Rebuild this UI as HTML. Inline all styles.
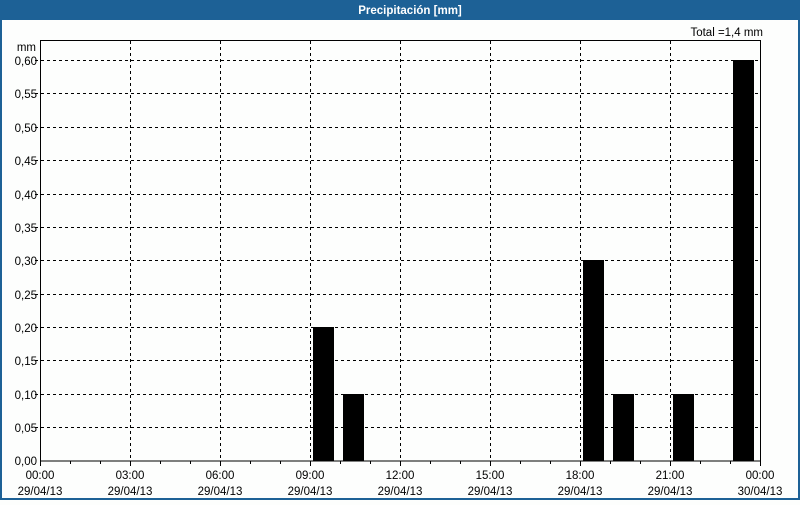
<!DOCTYPE html>
<html><head><meta charset="utf-8"><style>
body{margin:0;width:800px;height:500px;overflow:hidden;background:#fdfefd;font-family:"Liberation Sans",sans-serif}
</style></head><body>
<svg width="800" height="500" xmlns="http://www.w3.org/2000/svg" font-family="Liberation Sans, sans-serif" font-size="11.5">
<rect x="0" y="0" width="800" height="500" fill="#fdfefd"/>
<rect x="0" y="0" width="800" height="20" fill="#1d6196"/>
<rect x="0" y="0" width="2" height="500" fill="#1d6196"/>
<rect x="798" y="0" width="2" height="500" fill="#1d6196"/>
<rect x="0" y="498" width="800" height="2" fill="#1d6196"/>
<text x="410" y="14" fill="#fff" font-weight="bold" text-anchor="middle" font-size="11.5">Precipitación [mm]</text>
<text x="763" y="36" text-anchor="end" fill="#000">Total =1,4 mm</text>
<text x="36" y="51" text-anchor="end">mm</text>
<g stroke="#000" stroke-width="1" stroke-dasharray="3,3" shape-rendering="crispEdges">
<line x1="130.5" y1="41" x2="130.5" y2="461"/><line x1="220.5" y1="41" x2="220.5" y2="461"/>
<line x1="310.5" y1="41" x2="310.5" y2="461"/><line x1="400.5" y1="41" x2="400.5" y2="461"/>
<line x1="490.5" y1="41" x2="490.5" y2="461"/><line x1="580.5" y1="41" x2="580.5" y2="461"/>
<line x1="670.5" y1="41" x2="670.5" y2="461"/>
<line x1="35" y1="60.5" x2="760" y2="60.5"/><line x1="35" y1="93.5" x2="760" y2="93.5"/>
<line x1="35" y1="127.5" x2="760" y2="127.5"/><line x1="35" y1="160.5" x2="760" y2="160.5"/>
<line x1="35" y1="194.5" x2="760" y2="194.5"/><line x1="35" y1="227.5" x2="760" y2="227.5"/>
<line x1="35" y1="260.5" x2="760" y2="260.5"/><line x1="35" y1="294.5" x2="760" y2="294.5"/>
<line x1="35" y1="327.5" x2="760" y2="327.5"/><line x1="35" y1="360.5" x2="760" y2="360.5"/>
<line x1="35" y1="394.5" x2="760" y2="394.5"/><line x1="35" y1="427.5" x2="760" y2="427.5"/>
</g>
<g fill="#000">
<rect x="313" y="327" width="21" height="134"/>
<rect x="343" y="394" width="21" height="67"/>
<rect x="583" y="260" width="21" height="201"/>
<rect x="613" y="394" width="21" height="67"/>
<rect x="673" y="394" width="21" height="67"/>
<rect x="733" y="60" width="21" height="401"/>
</g>
<rect x="40.5" y="40.5" width="720" height="420.5" fill="none" stroke="#000" shape-rendering="crispEdges"/>
<g stroke="#000" shape-rendering="crispEdges">
<line x1="40.5" y1="461" x2="40.5" y2="466"/><line x1="70.5" y1="461" x2="70.5" y2="464"/><line x1="100.5" y1="461" x2="100.5" y2="464"/>
<line x1="130.5" y1="461" x2="130.5" y2="466"/><line x1="160.5" y1="461" x2="160.5" y2="464"/><line x1="190.5" y1="461" x2="190.5" y2="464"/>
<line x1="220.5" y1="461" x2="220.5" y2="466"/><line x1="250.5" y1="461" x2="250.5" y2="464"/><line x1="280.5" y1="461" x2="280.5" y2="464"/>
<line x1="310.5" y1="461" x2="310.5" y2="466"/><line x1="340.5" y1="461" x2="340.5" y2="464"/><line x1="370.5" y1="461" x2="370.5" y2="464"/>
<line x1="400.5" y1="461" x2="400.5" y2="466"/><line x1="430.5" y1="461" x2="430.5" y2="464"/><line x1="460.5" y1="461" x2="460.5" y2="464"/>
<line x1="490.5" y1="461" x2="490.5" y2="466"/><line x1="520.5" y1="461" x2="520.5" y2="464"/><line x1="550.5" y1="461" x2="550.5" y2="464"/>
<line x1="580.5" y1="461" x2="580.5" y2="466"/><line x1="610.5" y1="461" x2="610.5" y2="464"/><line x1="640.5" y1="461" x2="640.5" y2="464"/>
<line x1="670.5" y1="461" x2="670.5" y2="466"/><line x1="700.5" y1="461" x2="700.5" y2="464"/><line x1="730.5" y1="461" x2="730.5" y2="464"/>
<line x1="760.5" y1="461" x2="760.5" y2="466"/>
</g>
<g text-anchor="end">
<text x="37" y="65">0,60</text><text x="37" y="98">0,55</text><text x="37" y="132">0,50</text>
<text x="37" y="165">0,45</text><text x="37" y="199">0,40</text><text x="37" y="232">0,35</text>
<text x="37" y="265">0,30</text><text x="37" y="299">0,25</text><text x="37" y="332">0,20</text>
<text x="37" y="365">0,15</text><text x="37" y="399">0,10</text><text x="37" y="432">0,05</text>
<text x="37" y="465">0,00</text>
</g>
<g text-anchor="middle">
<text x="40" y="479">00:00</text><text x="40" y="495">29/04/13</text>
<text x="130" y="479">03:00</text><text x="130" y="495">29/04/13</text>
<text x="220" y="479">06:00</text><text x="220" y="495">29/04/13</text>
<text x="310" y="479">09:00</text><text x="310" y="495">29/04/13</text>
<text x="400" y="479">12:00</text><text x="400" y="495">29/04/13</text>
<text x="490" y="479">15:00</text><text x="490" y="495">29/04/13</text>
<text x="580" y="479">18:00</text><text x="580" y="495">29/04/13</text>
<text x="670" y="479">21:00</text><text x="670" y="495">29/04/13</text>
<text x="760" y="479">00:00</text><text x="760" y="495">30/04/13</text>
</g>
</svg>
</body></html>
